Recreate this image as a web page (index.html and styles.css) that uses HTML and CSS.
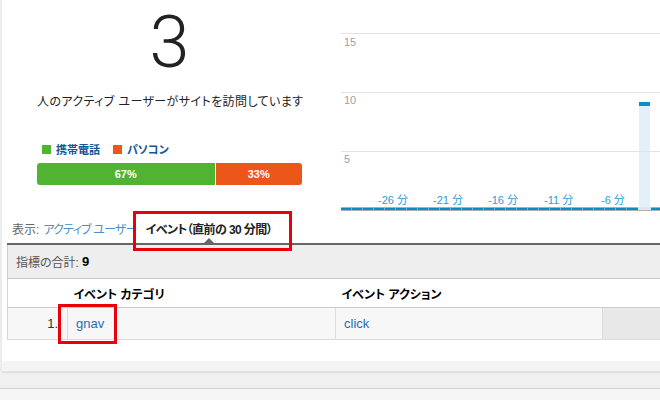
FILE: index.html
```html
<!DOCTYPE html>
<html lang="ja">
<head>
<meta charset="utf-8">
<title>リアルタイム</title>
<link rel="stylesheet" href="styles.css">
</head>
<body>
<div class="frame">
  <div class="card">
    <div class="top">
      <div class="summary">
        <div class="big">3</div>
        <div class="subtitle">人のアクティブ ユーザーがサイトを訪問しています</div>
        <div class="legend">
          <span class="sw sw-green"></span><span class="lg">携帯電話</span>
          <span class="sw sw-orange"></span><span class="lg">パソコン</span>
        </div>
        <div class="split">
          <div class="seg seg-green" style="width:67%">67%</div>
          <div class="seg seg-orange">33%</div>
        </div>
      </div>
      <div class="chart">
        <svg width="330" height="211" viewBox="0 0 330 211" xmlns="http://www.w3.org/2000/svg">
          <g class="grid">
            <line x1="0" y1="33.5" x2="330" y2="33.5"/>
            <line x1="0" y1="92.5" x2="330" y2="92.5"/>
          </g>
          <rect x="298" y="102" width="11" height="106" fill="#e4f0f8"/>
          <rect x="298" y="102" width="11" height="4" fill="#0b8dcc"/>
          <g class="grid">
            <line x1="0" y1="151.5" x2="330" y2="151.5"/>
          </g>
          <g class="ylab">
            <text x="3" y="46">15</text>
            <text x="3" y="104">10</text>
            <text x="3" y="163">5</text>
          </g>
          <g class="xlab">
            <text x="37" y="204">-26 分</text>
            <text x="92" y="204">-21 分</text>
            <text x="147" y="204">-16 分</text>
            <text x="203" y="204">-11 分</text>
            <text x="260" y="204">-6 分</text>
          </g>
          <rect x="0" y="207" width="330" height="1" fill="#8fb8d0"/>
          <rect x="0" y="208" width="330" height="2" fill="#6fb3dc"/>
          <g fill="#058dc7">
            <rect x="0" y="208" width="10" height="2"/><rect x="11" y="208" width="10" height="2"/>
            <rect x="22" y="208" width="10" height="2"/><rect x="33" y="208" width="10" height="2"/>
            <rect x="44" y="208" width="10" height="2"/><rect x="55" y="208" width="10" height="2"/>
            <rect x="66" y="208" width="10" height="2"/><rect x="77" y="208" width="10" height="2"/>
            <rect x="88" y="208" width="10" height="2"/><rect x="99" y="208" width="10" height="2"/>
            <rect x="110" y="208" width="10" height="2"/><rect x="121" y="208" width="10" height="2"/>
            <rect x="132" y="208" width="10" height="2"/><rect x="143" y="208" width="10" height="2"/>
            <rect x="154" y="208" width="10" height="2"/><rect x="165" y="208" width="10" height="2"/>
            <rect x="176" y="208" width="10" height="2"/><rect x="187" y="208" width="10" height="2"/>
            <rect x="198" y="208" width="10" height="2"/><rect x="209" y="208" width="10" height="2"/>
            <rect x="220" y="208" width="10" height="2"/><rect x="231" y="208" width="10" height="2"/>
            <rect x="242" y="208" width="10" height="2"/><rect x="253" y="208" width="10" height="2"/>
            <rect x="264" y="208" width="10" height="2"/><rect x="275" y="208" width="10" height="2"/>
            <rect x="286" y="208" width="11" height="2"/>
            <rect x="310" y="208" width="10" height="2"/><rect x="321" y="208" width="10" height="2"/>
          </g>
          <rect x="297" y="207" width="13" height="3" fill="#dfe6ea"/>
          <rect x="0" y="210" width="330" height="1" fill="#b0b0b0"/>
        </svg>
      </div>
    </div>
    <div class="tabs">
      <span class="tab-label">表示:</span>
      <a class="tab-link">アクティブ ユーザー</a>
      <span class="tab-active">イベント（直前の 30 分間）<i class="caret"></i></span>
    </div>
    <div class="report">
      <div class="total">指標の合計: <b>9</b></div>
      <table class="events">
        <colgroup>
          <col class="c-num"><col class="c-cat"><col class="c-act"><col class="c-rest">
        </colgroup>
        <thead>
          <tr><th></th><th>イベント カテゴリ</th><th>イベント アクション</th><th></th></tr>
        </thead>
        <tbody>
          <tr><td class="num">1.</td><td><a class="cell-link">gnav</a></td><td><a class="cell-link">click</a></td><td class="rest"></td></tr>
        </tbody>
      </table>
    </div>
  </div>
  <div class="card-foot"></div>
</div>
<div class="page-bottom"></div>

<div class="mark mark-tab"></div>
<div class="mark mark-cell"></div>
</body>
</html>
```
FILE: styles.css
```css
html, body {
  margin: 0;
  padding: 0;
}
body {
  background: #f0f0f0;
  font-family: "Liberation Sans", Arial, "Noto Sans CJK JP", sans-serif;
  font-feature-settings: "palt";
  color: #222;
  overflow: hidden;
  height: 400px;
  position: relative;
}
.frame {
  border-left: 2px solid #ececec;
}
.card {
  background: #fff;
  height: 361px;
}
.card-foot {
  height: 10px;
  background: #f4f4f4;
  border-bottom: 1px solid #e2e2e2;
  box-shadow: 0 1px 1px rgba(0,0,0,0.06);
}
.page-bottom {
  margin-top: 16px;
  border-top: 1px solid #d2d2d2;
  background: #f6f6f6;
  height: 20px;
}

/* top area */
.top {
  display: flex;
  height: 211px;
}
.summary {
  width: 265px;
  margin-left: 35px;
  padding-top: 7px;
  display: flex;
  flex-direction: column;
}
.big {
  font-family: Roboto, "Open Sans", sans-serif;
  font-weight: 300;
  font-size: 72px;
  line-height: 71px;
  text-align: center;
  color: #222;
}
.subtitle {
  margin-top: 15px;
  font-size: 12px;
  line-height: 18px;
  text-align: center;
  white-space: nowrap;
  letter-spacing: 0.4px;
  color: #222;
}
.legend {
  margin-top: 30px;
  margin-left: 5px;
  display: flex;
  align-items: center;
  height: 16px;
}
.sw {
  width: 9px;
  height: 9px;
  display: inline-block;
}
.sw-green { background: #50b432; }
.sw-orange { background: #ed561b; margin-left: 13px; }
.lg {
  margin-left: 5px;
  font-size: 11px;
  font-weight: bold;
  color: #11589a;
}
.split {
  margin-top: 6px;
  display: flex;
  height: 22px;
  border-radius: 3px;
  overflow: hidden;
}
.seg {
  color: #fff;
  font-size: 11px;
  font-weight: bold;
  line-height: 22px;
  text-align: center;
}
.seg-green {
  background: #50b432;
  border-right: 1px solid #fff;
}
.seg-orange {
  background: #ed561b;
  flex: 1;
}
.chart {
  margin-left: 39px;
  flex: 1;
  overflow: hidden;
}
.chart svg { display: block; }
.grid line {
  stroke: #e3e3e3;
  stroke-width: 1;
}
.ylab text {
  font-family: "Liberation Sans", Arial, sans-serif;
  font-size: 11px;
  fill: #a0a0a0;
}
.xlab text {
  font-family: "Liberation Sans", Arial, "Noto Sans CJK JP", sans-serif;
  font-size: 11px;
  fill: #2e9bd6;
}

/* tabs */
.tabs {
  height: 32px;
  display: flex;
  align-items: flex-end;
  padding-left: 10px;
  box-sizing: border-box;
  padding-bottom: 5px;
  font-size: 12px;
  line-height: 16px;
}
.tab-label { color: #666; }
.tab-link {
  color: #4a8fc6;
  margin-left: 4px;
  letter-spacing: -0.8px;
}
.tab-active {
  margin-left: 9px;
  font-weight: bold;
  color: #222;
  position: relative;
  letter-spacing: -0.6px;
}
.caret {
  position: absolute;
  left: 50%;
  bottom: -5px;
  margin-left: -5px;
  width: 0;
  height: 0;
  border-left: 5px solid transparent;
  border-right: 5px solid transparent;
  border-bottom: 5px solid #666;
}

/* report */
.report {
  margin-left: 5px;
  border-top: 2px solid #666;
}
.total {
  height: 34px;
  box-sizing: border-box;
  background: #eee;
  border-left: 1px solid #d0d0d0;
  border-bottom: 1px solid #c8c8c8;
  padding-left: 8px;
  display: flex;
  align-items: center;
  font-size: 12px;
  color: #555;
}
.total b {
  color: #000;
  font-size: 13px;
  margin-left: 3px;
}
.events {
  width: 100%;
  table-layout: fixed;
  border-collapse: collapse;
  border-left: 1px solid #d6d6d6;
}
.c-num { width: 60px; }
.c-cat { width: 268px; }
.c-act { width: 267px; }
.events th {
  height: 28px;
  padding: 0 0 0 6px;
  text-align: left;
  font-size: 12px;
  font-weight: bold;
  color: #000;
  border-bottom: 1px solid #ccc;
}
.events td {
  height: 31px;
  padding: 0 0 0 8px;
  background: #f7f7f7;
  border-left: 1px solid #dcdcdc;
  border-bottom: 1px solid #dcdcdc;
  font-size: 13px;
}
.events td.num {
  text-align: right;
  padding: 0 9px 0 0;
  color: #333;
  border-left: none;
}
.events td.rest {
  background: #e8e8e8;
}
.cell-link {
  color: #2a6bb3;
}

/* annotation boxes */
.mark {
  position: absolute;
  border: 3px solid #e8000b;
  box-sizing: border-box;
}
.mark-tab {
  left: 133px;
  top: 211px;
  width: 159px;
  height: 40px;
}
.mark-cell {
  left: 58px;
  top: 304px;
  width: 59px;
  height: 40px;
}
```
